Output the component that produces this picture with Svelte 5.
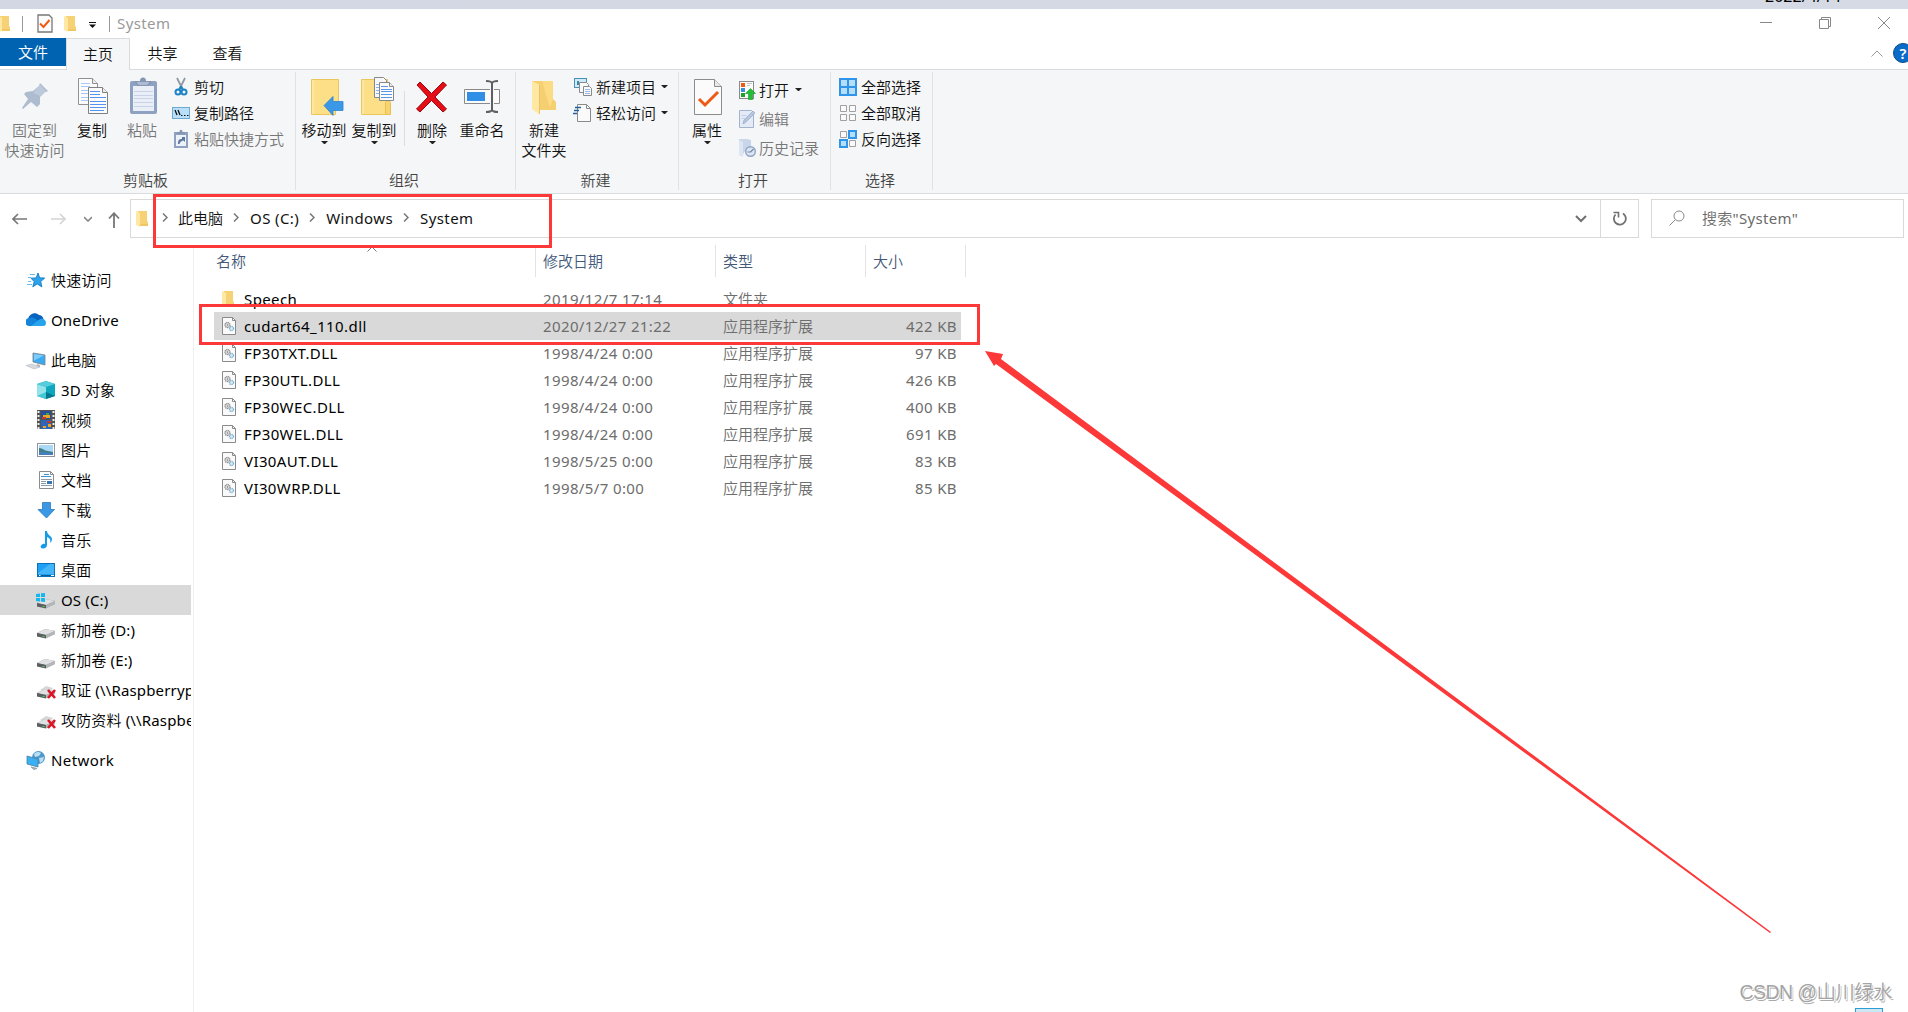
<script lang="ts">
  type NavItem = { label: string; icon: string; child?: boolean; gap?: boolean; selected?: boolean };
  type Small = { label: string; icon: string; disabled?: boolean; menu?: boolean };

  const tabs = ['主页', '共享', '查看'];

  const clipboardSmall: Small[] = [
    { label: '剪切', icon: 'cut' },
    { label: '复制路径', icon: 'path' },
    { label: '粘贴快捷方式', icon: 'shortcut', disabled: true }
  ];
  const newSmall: Small[] = [
    { label: '新建项目', icon: 'newitem', menu: true },
    { label: '轻松访问', icon: 'easy', menu: true }
  ];
  const openSmall: Small[] = [
    { label: '打开', icon: 'open', menu: true },
    { label: '编辑', icon: 'edit', disabled: true },
    { label: '历史记录', icon: 'history', disabled: true }
  ];
  const selectSmall: Small[] = [
    { label: '全部选择', icon: 'selall' },
    { label: '全部取消', icon: 'selnone' },
    { label: '反向选择', icon: 'selinv' }
  ];

  const crumbs = ['此电脑', 'OS (C:)', 'Windows', 'System'];

  const nav: NavItem[] = [
    { label: '快速访问', icon: 'star' },
    { label: 'OneDrive', icon: 'cloud', gap: true },
    { label: '此电脑', icon: 'pc', gap: true },
    { label: '3D 对象', icon: 'cube', child: true },
    { label: '视频', icon: 'video', child: true },
    { label: '图片', icon: 'picture', child: true },
    { label: '文档', icon: 'doc', child: true },
    { label: '下载', icon: 'download', child: true },
    { label: '音乐', icon: 'music', child: true },
    { label: '桌面', icon: 'desktop', child: true },
    { label: 'OS (C:)', icon: 'osdrive', child: true, selected: true },
    { label: '新加卷 (D:)', icon: 'drive', child: true },
    { label: '新加卷 (E:)', icon: 'drive', child: true },
    { label: '取证 (\\\\Raspberrypi)', icon: 'netdrive', child: true },
    { label: '攻防资料 (\\\\Raspberrypi)', icon: 'netdrive', child: true },
    { label: 'Network', icon: 'network', gap: true }
  ];

  const files = [
    { name: 'Speech', date: '2019/12/7 17:14', type: '文件夹', size: '' },
    { name: 'cudart64_110.dll', date: '2020/12/27 21:22', type: '应用程序扩展', size: '422 KB' },
    { name: 'FP30TXT.DLL', date: '1998/4/24 0:00', type: '应用程序扩展', size: '97 KB' },
    { name: 'FP30UTL.DLL', date: '1998/4/24 0:00', type: '应用程序扩展', size: '426 KB' },
    { name: 'FP30WEC.DLL', date: '1998/4/24 0:00', type: '应用程序扩展', size: '400 KB' },
    { name: 'FP30WEL.DLL', date: '1998/4/24 0:00', type: '应用程序扩展', size: '691 KB' },
    { name: 'VI30AUT.DLL', date: '1998/5/25 0:00', type: '应用程序扩展', size: '83 KB' },
    { name: 'VI30WRP.DLL', date: '1998/5/7 0:00', type: '应用程序扩展', size: '85 KB' }
  ];

  let selected = $state('cudart64_110.dll');
</script>

{#snippet folder()}
  <svg width="14" height="18" viewBox="0 0 14 18">
    <path d="M2 1h9v10l1 1v4H2z" fill="#f6d275" />
    <path d="M0 1l4 2v14l-4-2z" fill="#ffe8a3" />
    <path d="M4 15h8" stroke="#e8bd55" />
  </svg>
{/snippet}

{#snippet caret()}
  <svg class="caret" width="7" height="4" viewBox="0 0 7 4"><path d="M0 0h7L4 3H3z" fill="#222" /></svg>
{/snippet}

{#snippet bigIcon(name: string)}
  <svg width="40" height="40" viewBox="0 0 40 40">
    {#if name === 'pin'}
      <path d="M25 6l8 8-2 1-1 0-5 5 0 7-3 3-6-5-8 7-1-1 6-9-4-5 2-2 7-1 6-5z" fill="#adbccf" />
      <path d="M25 8l6 6-6 5-7-3z" fill="#bccadb" />
    {:else if name === 'copy'}
      <path d="M6.500 1.500h14l5 5v21h-19z" fill="#fcfcfc" stroke="#909090" />
      <path d="M20.500 1.500v5h5" fill="#eee" stroke="#909090" />
      <path d="M9 6.500h9M9 9.500h9M9 13.500h8M9 16.500h8M9 20.500h8M9 23.500h8" stroke="#a9c9f5" />
      <path d="M16.500 10.500h14l5 5v21h-19z" fill="#fcfcfc" stroke="#808080" />
      <path d="M30.500 10.500v5h5" fill="#eee" stroke="#808080" />
      <path d="M18 14.500h10M18 17.500h10M18 20.500h16M18 24.500h16M18 27.500h16M18 30.500h16M18 33.500h14" stroke="#5593ec" />
    {:else if name === 'paste'}
      <rect x="8" y="4" width="27" height="33" rx="2" fill="#8ea1c1" />
      <rect x="11" y="9" width="21" height="25" fill="#e9eef7" />
      <path d="M12 14.500h19M12 18.500h19M12 21.500h19M12 25.500h19M12 29.500h19" stroke="#c6d3e8" />
      <path d="M13 4h5c0-2 1-3.500 3-3.500s3 1.500 3 3.500h5v2l-3 3h-10l-3-3z" fill="#8496b4" />
      <path d="M15 5h12v1l-2 2h-8l-2-2z" fill="#aebcd3" />
    {:else if name === 'moveto'}
      <path d="M7.500 2.500h27v26h-3v9h-24z" fill="#fcdf87" stroke="#eac65b" />
      <path d="M9 3v34" stroke="#fff0bb" />
      <path d="M31.500 26v11" stroke="#eac65b" />
      <path d="M20 28.500l9-9v5h10v9h-10v5z" fill="#3a98e6" stroke="#2c84d0" stroke-width="0.8" />
    {:else if name === 'copyto'}
      <path d="M7.500 2.500h26v35h-26z" fill="#fcdf87" stroke="#eac65b" />
      <path d="M9 3v34" stroke="#fff0bb" />
      <path d="M31.500 37.500v-12c0-2 5-2 5 0v12z" fill="#f8d470" stroke="#e8bf52" />
      <path d="M20.500.500h9l3 3v17h-12z" fill="#f6f8fb" stroke="#888" />
      <path d="M22 7.500h3M22 10.500h3M22 13.500h3M22 16.500h3" stroke="#8ab2ea" />
      <path d="M25.500 5.500h10l4 4v14h-14z" fill="#fcfcfc" stroke="#888" />
      <path d="M35.500 5.500v4h4" fill="#eee" stroke="#888" />
      <path d="M27 9.500h7M27 12.500h11M27 14.500h11M27 17.500h11M27 20.500h11" stroke="#5a96e6" />
    {:else if name === 'delete'}
      <path d="M5 8l3-3 11.500 11.500L31 5l3.500 3L23 20l11.500 12-3.500 3-11.500-11.500L8 35l-3.500-3L16 20z" fill="#e50d16" stroke="#9c0910" stroke-width="1" />
    {:else if name === 'rename'}
      <path d="M2.500 12.500h35v14h-35z" fill="#fbfbfb" stroke="#8a8a8a" />
      <rect x="5" y="15" width="18" height="9" fill="#318fe6" />
      <rect x="28" y="10" width="4" height="19" fill="#f5f6f7" />
      <path d="M30 5v29M30 6c-1-2-3-2-6-2M30 6c1-2 3-2 6-2M30 33c-1 2-3 2-6 2M30 33c1 2 3 2 6 2" fill="none" stroke="#606060" stroke-width="2" />
    {:else if name === 'newfolder'}
      <path d="M8 4h21v18l3 3v8H15z" fill="#f5cf70" />
      <path d="M18 4h11v18l-3 9z" fill="#ffe08a" opacity="0.7" />
      <path d="M8 4l8 4v30l-8-6z" fill="#ffe7a4" />
      <path d="M15.500 8v29" stroke="#e9c467" />
    {:else if name === 'props'}
      <path d="M7.500 2.500h20l7 7v28h-27z" fill="#fbfbfb" stroke="#8c8c8c" />
      <path d="M27.500 2.500v7h7" fill="#e8e8e8" stroke="#8c8c8c" />
      <path d="M12 22l6 6 13-13" fill="none" stroke="#ee5a14" stroke-width="3" />
    {/if}
  </svg>
{/snippet}

{#snippet smallIcon(name: string)}
  <svg width="20" height="20" viewBox="0 0 20 20">
    {#if name === 'cut'}
      <path d="M6 1l5.500 11M14 1L8.500 12" stroke="#8c97a3" stroke-width="1.700" />
      <circle cx="7" cy="15" r="2.500" fill="none" stroke="#1c83c6" stroke-width="2" />
      <circle cx="13" cy="15" r="2.500" fill="none" stroke="#1c83c6" stroke-width="2" />
      <path d="M10 9.500l-2 3.500M10 9.500l2 3.500" stroke="#1c83c6" stroke-width="2" />
    {:else if name === 'path'}
      <rect x="1.500" y="4.500" width="17" height="11" fill="#b9e0f8" stroke="#6fa9cd" />
      <path d="M4 7l2 5M7 7l2 5" stroke="#111" stroke-width="1.300" />
      <path d="M10 12.500h1.500M13 12.500h1.500M16 12.500h1.500" stroke="#111" />
    {:else if name === 'shortcut'}
      <path d="M3 3h14v16H3z" fill="#8ea1c1" />
      <path d="M5 6h10v11H5z" fill="#edf1f8" />
      <path d="M6 5V3h2.500c0-3 3-3 3 0H14v2z" fill="#8496b4" />
      <path d="M7 15c0-4 1-5 4-5V8l3 0v5l-1.500-1.500C10 12 9 13 8.500 15z" fill="#5f779f" />
    {:else if name === 'newitem'}
      <rect x="1.500" y="1.500" width="12" height="9" fill="#cfe9f7" stroke="#4a8fb5" />
      <path d="M4 4h2v4H4z" fill="#3c86a8" />
      <path d="M6.500 5.500h7l2 2v8h-9z" fill="#fafafa" stroke="#8a8a8a" />
      <path d="M10.500 9.500h6l2 2v7h-8z" fill="#fafafa" stroke="#8a8a8a" />
      <path d="M12 12.500h5M12 14.500h5M12 16.500h5" stroke="#9abce8" />
    {:else if name === 'easy'}
      <path d="M4.500 1.500h9l4 4v13h-13z" fill="#fafafa" stroke="#8a8a8a" />
      <path d="M13.500 1.500v4h4" fill="none" stroke="#8a8a8a" />
      <path d="M2 4.500h6M1 7.500h5M0 10.500h4" stroke="#235f9c" stroke-width="1.300" />
    {:else if name === 'open'}
      <rect x="1.500" y="1.500" width="14" height="17" fill="#fcfcfc" stroke="#8a8a8a" />
      <rect x="3" y="3" width="4" height="4" fill="#ee5a14" />
      <rect x="3" y="8" width="4" height="4" fill="#3a8ee0" />
      <rect x="3" y="13" width="4" height="4" fill="#1fa22a" />
      <path d="M9 3.500h5M9 5.500h3" stroke="#c5c5c5" />
      <path d="M12.500 8.500l5 5h-3v6h-4v-6h-3z" fill="#22bf35" stroke="#159425" stroke-width="0.600" />
    {:else if name === 'edit'}
      <path d="M1.500 1.500h12l2 2v15h-14z" fill="#e4ebf6" stroke="#a3b3cc" />
      <path d="M5 15l1-4L15 2l2 2-9 9z" fill="#b7c6dc" stroke="#93a7c6" stroke-width="0.700" />
      <path d="M3.500 6.500h5M3.500 9.500h3" stroke="#c3cfe2" />
    {:else if name === 'history'}
      <path d="M1 1h8l4 1v11H7l-3 5-3-1z" fill="#c9d6e9" />
      <path d="M1 2l4 2v15l-4-2z" fill="#dde6f2" />
      <circle cx="12.500" cy="13.500" r="4.800" fill="#dce5f1" stroke="#8ea3c3" stroke-width="1.400" />
      <path d="M12.500 14l3-3M12.500 14h-3" stroke="#6f87ad" stroke-width="1.200" />
    {:else if name === 'selall'}
      <rect x="1" y="1" width="18" height="18" fill="#2f95e8" />
      <path d="M3 3h6v6H3zM11 3h6v6h-6zM3 11h6v6H3zM11 11h6v6h-6z" fill="#b4defa" />
    {:else if name === 'selnone'}
      <path d="M2.500 2.500h6v6h-6zM11.500 2.500h6v6h-6zM2.500 11.500h6v6h-6zM11.500 11.500h6v6h-6z" fill="#fafafa" stroke="#a0a0a0" />
    {:else if name === 'selinv'}
      <path d="M2.500 2.500h6v6h-6zM11.500 11.500h6v6h-6z" fill="#fafafa" stroke="#a0a0a0" />
      <path d="M11 2h7v7h-7zM2 11h7v7H2z" fill="#b4defa" stroke="#2f95e8" stroke-width="2" />
    {/if}
  </svg>
{/snippet}

{#snippet driveBody()}
  <path d="M1 13l8-4 10 2v3l-9 4-9-2z" fill="#8b8d8f" />
  <path d="M1 13l8-4 10 2-9 4z" fill="#dfe1e3" />
  <path d="M1 13l9 2v3.500l-9-2z" fill="#5c5f61" />
  <path d="M10 15l9-4v3l-9 4.500z" fill="#b4b7b9" />
  <path d="M6.500 16.500h2" stroke="#4cd04c" />
{/snippet}

{#snippet navIcon(name: string)}
  <svg width="20" height="20" viewBox="0 0 20 20">
    {#if name === 'star'}
      <path d="M12 3l1.600 4.800 5.100.300-4 3.400 1.200 5.400-4.700-3-4.400 3 1.400-5.300-3.200-3.400 5.200-.300z" fill="#2ba4ec" stroke="#1579c4" stroke-width="0.900" />
      <path d="M4 4.500h5M2 7.500h3M2 11.500h3M1 14.500h5" stroke="#67bdec" />
    {:else if name === 'cloud'}
      <path d="M3 15.500a3.500 3.500 0 0 1-1-6.500C3 4 9 1 13 5c4 .500 4 3 4 3l2 4-2 3.500z" fill="#0a63bd" />
      <path d="M3 16a4 4 0 0 1 1-8c3-1 5 0 7 2l7 5-1 1z" fill="#1483da" />
      <path d="M5 16l7-5.500c4-3.500 8-1 8 2.500a3 3 0 0 1-3 3z" fill="#27a5ec" />
    {:else if name === 'pc'}
      <path d="M7 3l12 2v10l-12-3z" fill="#3aaaf0" stroke="#7e8890" stroke-width="0.900" />
      <path d="M8 4l10 1.500-10 5z" fill="#7ccbfb" />
      <path d="M11 14l3 1v2h-4z" fill="#b1b7bd" />
      <path d="M0 15.500l6-1.500 8 3-6 2z" fill="#d6dade" stroke="#adb3b8" stroke-width="0.500" />
    {:else if name === 'cube'}
      <path d="M1 4l9-3 9 3v12l-9 3-9-3z" fill="#0fa7bd" />
      <path d="M1 4l9 3v12l-9-3z" fill="#94e3ea" />
      <path d="M1 4l9-3 9 3-9 3z" fill="#56cddd" />
      <path d="M10 12l9 4-9 3z" fill="#04798f" />
      <path d="M10 12v7l-9-3z" fill="#45c6d3" />
    {:else if name === 'video'}
      <rect x="1" y="0" width="18" height="19" fill="#56524d" />
      <path d="M2.500 1v18M17.500 1v18" stroke="#eee" stroke-width="2" stroke-dasharray="2 2" />
      <rect x="5" y="1" width="10" height="8" fill="#244f9c" />
      <rect x="5" y="10" width="10" height="9" fill="#2b66bd" />
      <path d="M7 5h7v3H7zM7 16h3v2H7zM12 14h3v3h-3z" fill="#e7a624" />
      <path d="M6 7h4v2H6zM11 11h4v2h-4z" fill="#c5392d" />
      <path d="M10 3h3v2h-3z" fill="#47a142" />
    {:else if name === 'picture'}
      <rect x="1.500" y="3.500" width="17" height="13" fill="#fff" stroke="#8e9499" />
      <rect x="3" y="5" width="14" height="10" fill="#a8d8f5" />
      <path d="M3 8c4 0 5 3 9 3l5 1v3H3z" fill="#3f7e86" />
      <path d="M3 12c5-1 9 1 14 1v2H3z" fill="#457fbb" />
    {:else if name === 'doc'}
      <path d="M3.500 1.500h11l3 3v14h-14z" fill="#fff" stroke="#8c8c8c" />
      <path d="M14.500 1.500v3h3" fill="none" stroke="#8c8c8c" />
      <path d="M8 4.500h5M5 6.500h10" stroke="#3a93cf" />
      <path d="M5 9.500h11M5 11.500h5M5 13.500h5M5 15.500h11" stroke="#8d9ba6" />
      <rect x="11" y="11" width="5" height="3" fill="#3178b5" />
    {:else if name === 'download'}
      <path d="M6.500 2.500h8v7h4L10.500 18 2 9.500h4.500z" fill="#3a98e6" stroke="#2878bd" stroke-width="0.800" />
    {:else if name === 'music'}
      <path d="M9 1h2c0 4 5 5 5 8 0 2-1 3-2 4 1-3 0-5-3-6v8c0 2-2 3.500-4 3.500S4 17 5 15.500s3-2 4-1.500z" fill="#159be8" />
    {:else if name === 'desktop'}
      <rect x="1.500" y="3.500" width="17" height="13" fill="#1ea1f5" stroke="#0c71b5" />
      <path d="M2 13L14 4h4v10H2z" fill="#45b5fa" />
      <path d="M2 15.500h16" stroke="#0b5d98" />
      <path d="M3 15.500h1.500M15 15.500h3" stroke="#fff" />
    {:else if name === 'osdrive'}
      {@render driveBody()}
      <path d="M0 4l4-.5V7H0zM5 3.300L9 3v4H5zM0 8h4v3.500l-4-.5zM5 8h4v4l-4-.5z" fill="#14b7ee" />
    {:else if name === 'drive'}
      {@render driveBody()}
    {:else if name === 'netdrive'}
      <path d="M4 10l6-4 7 2-5 6z" fill="#d5d7d9" />
      {@render driveBody()}
      <path d="M12 10l7 8M19 10l-7 8" stroke="#dc1425" stroke-width="2.600" />
    {:else if name === 'network'}
      <circle cx="12.500" cy="7.500" r="6.500" fill="#4f97c9" />
      <path d="M8 4c3-3 5-2 7-1l-2 3-4 1zM13 8l5-1-1 4-3 2z" fill="#b9e0f2" />
      <path d="M1 6l11 3v8L1 14z" fill="#38b0f5" stroke="#4f7f9d" stroke-width="0.800" />
      <path d="M5 17l6 1.500-3 1z" fill="#aab2b9" stroke="#9ca5ac" />
    {/if}
  </svg>
{/snippet}

{#snippet dll()}
  <svg width="14" height="18" viewBox="0 0 14 18">
    <path d="M.500.500h10l3 3v14H.500z" fill="#fafafa" stroke="#8a8a8a" />
    <path d="M10.500.500v3h3" fill="none" stroke="#8a8a8a" />
    <circle cx="5.500" cy="8" r="2.500" fill="#e4e4e4" stroke="#8b8b8b" stroke-width="1.300" stroke-dasharray="1.200 .5" />
    <circle cx="5.500" cy="8" r=".8" fill="#777" />
    <circle cx="9.500" cy="11.500" r="2" fill="#d9edf8" stroke="#7fb0d0" stroke-width="1.300" stroke-dasharray="1.200 .5" />
  </svg>
{/snippet}

{#snippet big(name: string, lines: string[], disabled = false, menu = false)}
  <button type="button" class="big" class:disabled>
    {@render bigIcon(name)}
    {#each lines as line}
      <span>{line}</span>
    {/each}
    {#if menu}{@render caret()}{/if}
  </button>
{/snippet}

{#snippet smalls(items: Small[])}
  {#each items as item}
    <button type="button" class="small" class:disabled={item.disabled}>
      {@render smallIcon(item.icon)}
      <span>{item.label}</span>
      {#if item.menu}{@render caret()}{/if}
    </button>
  {/each}
{/snippet}

<div class="window">
  <div class="behind"><span>2022/4/14</span></div>

  <header class="titlebar">
    <span class="app-icon">{@render folder()}</span>
    <i class="bar"></i>
    <svg class="check" width="16" height="19" viewBox="0 0 16 19">
      <path d="M1 1h11l3 3v14H1z" fill="#fcfcfc" stroke="#777" stroke-width="1.300" />
      <path d="M3 9.500l3.500 3.500 6-7" fill="none" stroke="#ee5a14" stroke-width="2" />
    </svg>
    {@render folder()}
    <svg class="quick" width="7" height="6" viewBox="0 0 7 6"><path d="M0 0h7v1H0zM0 2.500h7L3.500 6z" fill="#111" /></svg>
    <i class="bar"></i>
    <span class="title">System</span>
    <div class="controls">
      <svg width="12" height="12" viewBox="0 0 12 12"><path d="M0 5.500h12" stroke="#888" /></svg>
      <svg width="12" height="12" viewBox="0 0 12 12"><path d="M.500 2.500h9v9h-9zM2.500 2.500v-2h9v9h-2" fill="none" stroke="#888" /></svg>
      <svg width="12" height="12" viewBox="0 0 12 12"><path d="M0 0l12 12M12 0L0 12" stroke="#888" /></svg>
    </div>
  </header>

  <nav class="tabs">
    <button type="button" class="file">文件</button>
    {#each tabs as tab, index}
      <button type="button" class="tab" class:active={index === 0}>{tab}</button>
    {/each}
    <div class="help">
      <svg width="12" height="7" viewBox="0 0 12 7"><path d="M.500 6.500l5.500-5.500 5.500 5.500" fill="none" stroke="#999" /></svg>
      <span class="question">?</span>
    </div>
  </nav>

  <section class="ribbon">
    <div class="group clipboard">
      <div class="tools">
        {@render big('pin', ['固定到', '快速访问'], true)}
        {@render big('copy', ['复制'])}
        {@render big('paste', ['粘贴'], true)}
        <div class="stack">{@render smalls(clipboardSmall)}</div>
      </div>
      <span class="group-name">剪贴板</span>
    </div>
    <div class="group organize">
      <div class="tools">
        {@render big('moveto', ['移动到'], false, true)}
        {@render big('copyto', ['复制到'], false, true)}
        <i class="divider"></i>
        {@render big('delete', ['删除'], false, true)}
        {@render big('rename', ['重命名'])}
      </div>
      <span class="group-name">组织</span>
    </div>
    <div class="group create">
      <div class="tools">
        {@render big('newfolder', ['新建', '文件夹'])}
        <div class="stack">{@render smalls(newSmall)}</div>
      </div>
      <span class="group-name">新建</span>
    </div>
    <div class="group openers">
      <div class="tools">
        {@render big('props', ['属性'], false, true)}
        <div class="stack loose">{@render smalls(openSmall)}</div>
      </div>
      <span class="group-name">打开</span>
    </div>
    <div class="group select">
      <div class="tools">
        <div class="stack">{@render smalls(selectSmall)}</div>
      </div>
      <span class="group-name">选择</span>
    </div>
  </section>

  <div class="location">
    <div class="arrows">
      <svg width="16" height="12" viewBox="0 0 16 12"><path d="M1 6h14M6 1L1 6l5 5" fill="none" stroke="#777" stroke-width="1.600" /></svg>
      <svg width="16" height="12" viewBox="0 0 16 12"><path d="M1 6h14M10 1l5 5-5 5" fill="none" stroke="#d4d4d4" stroke-width="1.600" /></svg>
      <svg width="8" height="6" viewBox="0 0 8 6"><path d="M0 1l4 4 4-4" fill="none" stroke="#888" stroke-width="1.600" /></svg>
      <svg width="12" height="16" viewBox="0 0 12 16"><path d="M6 1v15M1 6.500L6 1.200l5 5.300" fill="none" stroke="#777" stroke-width="1.800" /></svg>
    </div>
    <div class="address">
      {@render folder()}
      {#each crumbs as crumb}
        <svg class="chevron" width="6" height="9" viewBox="0 0 6 9"><path d="M1 .500l4 4-4 4" fill="none" stroke="#777" stroke-width="1.500" /></svg>
        <span class="crumb">{crumb}</span>
      {/each}
      <svg class="drop" width="12" height="8" viewBox="0 0 12 8"><path d="M1 1l5 5 5-5" fill="none" stroke="#707070" stroke-width="2" /></svg>
      <button type="button" class="refresh" aria-label="refresh">
        <svg width="16" height="16" viewBox="0 0 16 16">
          <path d="M11 2.500A6 6 0 1 1 3.500 3.500" fill="none" stroke="#707070" stroke-width="1.800" />
          <path d="M1.500 1.500h5v5" fill="none" stroke="#707070" stroke-width="1.600" />
        </svg>
      </button>
    </div>
    <div class="search">
      <svg width="16" height="16" viewBox="0 0 16 16"><circle cx="10" cy="6" r="5" fill="none" stroke="#888" /><path d="M6.500 9.500L.500 15.500" stroke="#888" /></svg>
      <span>搜索"System"</span>
    </div>
  </div>

  <div class="body">
    <aside>
      {#each nav as item}
        <div class="nav-item" class:child={item.child} class:gap={item.gap} class:selected={item.selected}>
          {@render navIcon(item.icon)}
          <span>{item.label}</span>
        </div>
      {/each}
    </aside>
    <main>
      <div class="head">
        <span>名称</span>
        <span>修改日期</span>
        <span>类型</span>
        <span>大小</span>
        <svg class="sort" width="10" height="6" viewBox="0 0 10 6"><path d="M.500 5.500L5 1l4.500 4.500" fill="none" stroke="#777" /></svg>
      </div>
      {#each files as file}
        <!-- svelte-ignore a11y_click_events_have_key_events, a11y_no_static_element_interactions -->
        <div class="row" class:selected={file.name === selected} onclick={() => (selected = file.name)}>
          <span class="name">
            {#if file.size}{@render dll()}{:else}{@render folder()}{/if}
            {file.name}
          </span>
          <span>{file.date}</span>
          <span class="type">{file.type}</span>
          <span class="size">{file.size}</span>
        </div>
      {/each}
    </main>
  </div>

  <div class="mark mark-path"></div>
  <div class="mark mark-file"></div>
  <svg class="pointer" width="790" height="585" viewBox="0 0 790 585">
    <path d="M0 0l18 3-2 5L786 581l-1 1L11 13l-2 2z" fill="#fc3838" />
  </svg>
  <div class="watermark">CSDN @山川绿水</div>
  <div class="corner"></div>
</div>

<style>
  :global(body) {
    margin: 0;
    overflow: hidden;
  }

  .window {
    position: relative;
    display: flex;
    flex-direction: column;
    width: 1908px;
    height: 1012px;
    overflow: hidden;
    background: #fff;
    color: #111;
    font-family: 'Noto Sans', 'Noto Sans CJK SC DemiLight', 'Noto Sans CJK SC', sans-serif;
    font-size: 15px;
    line-height: 20px;
  }

  svg {
    display: block;
    flex: none;
  }

  button {
    padding: 0;
    border: none;
    background: transparent;
    color: inherit;
    font: inherit;
  }

  .behind {
    display: flex;
    justify-content: flex-end;
    align-items: flex-end;
    height: 9px;
    overflow: hidden;
    background: linear-gradient(90deg, #d2d7e3, #d6dae4);
  }

  .behind span {
    margin: 0 67px 3px 0;
    font-size: 16px;
    color: #000;
  }

  .titlebar {
    display: flex;
    align-items: center;
    height: 29px;
  }

  .app-icon {
    margin-left: -2px;
  }

  .bar {
    width: 1px;
    height: 16px;
    background: #999;
  }

  .app-icon + .bar {
    margin: 0 14px 0 10px;
  }

  .check {
    margin-right: 11px;
  }

  .quick {
    margin: 2px 13px 0 11px;
  }

  .title {
    margin: -2px 0 0 7px;
    color: #999;
    letter-spacing: 0.4px;
  }

  .controls {
    display: flex;
    gap: 47px;
    margin: -1px 18px 0 auto;
  }

  .tabs {
    display: flex;
    height: 31px;
    border-bottom: 1px solid #dadbdc;
  }

  .file {
    width: 66px;
    height: 28px;
    background: #0063b1;
    color: #fff;
  }

  .tab {
    width: 65px;
    height: 31px;
    padding-bottom: 2px;
  }

  .tab.active {
    box-sizing: border-box;
    width: 64px;
    height: 32px;
    border: 1px solid #dadbdc;
    border-bottom: none;
    background: #f5f6f7;
  }

  .help {
    display: flex;
    align-items: center;
    gap: 10px;
    margin: -1px -5px 0 auto;
  }

  .question {
    width: 18px;
    height: 18px;
    border: 1px solid #0a4d87;
    border-radius: 50%;
    background: #0a6bc9;
    color: #fff;
    font-weight: 600;
    line-height: 18px;
    text-align: center;
  }

  .ribbon {
    display: flex;
    height: 123px;
    border-bottom: 1px solid #dadbdc;
    background: #f5f6f7;
  }

  .group {
    box-sizing: border-box;
    display: flex;
    flex-direction: column;
    justify-content: space-between;
    height: 118px;
    margin-top: 2px;
    border-right: 1px solid #e0e1e2;
  }

  .clipboard {
    width: 296px;
    padding-left: 2px;
  }

  .organize {
    width: 220px;
    padding-left: 3px;
  }

  .create {
    width: 163px;
    padding-left: 3px;
  }

  .openers {
    width: 152px;
    padding-left: 3px;
  }

  .select {
    width: 102px;
    padding-left: 3px;
  }

  .tools {
    display: flex;
  }

  .group-name {
    padding-right: 6px;
    color: #444;
    text-align: center;
  }

  .big {
    display: flex;
    flex-direction: column;
    align-items: center;
    width: 50px;
    padding-top: 5px;
    white-space: nowrap;
  }

  .big svg {
    margin-bottom: 3px;
  }

  .clipboard .big:first-child {
    width: 65px;
  }

  .big .caret {
    margin-top: 1px;
  }

  .disabled {
    color: #777;
  }

  .divider {
    width: 1px;
    height: 55px;
    margin: 19px 2px 0 5px;
    background: #dcdddf;
  }

  .stack {
    display: flex;
    flex-direction: column;
    gap: 6px;
    padding: 5px 0 0 4px;
  }

  .stack.loose {
    gap: 9px;
    padding: 8px 0 0 6px;
  }

  .small {
    display: flex;
    align-items: center;
    gap: 3px;
    height: 20px;
    white-space: nowrap;
  }

  .loose .small {
    gap: 1px;
  }

  .small .caret {
    margin-left: 2px;
  }

  .loose .caret {
    margin-left: 5px;
  }

  .location {
    display: flex;
    height: 40px;
    padding: 5px 4px 6px 0;
  }

  .arrows {
    display: flex;
    align-items: center;
    width: 130px;
  }

  .arrows svg:nth-child(1) {
    margin-left: 12px;
  }

  .arrows svg:nth-child(2) {
    margin-left: 22px;
  }

  .arrows svg:nth-child(3) {
    margin-left: 18px;
  }

  .arrows svg:nth-child(4) {
    margin: 2px 0 0 16px;
  }

  .address {
    box-sizing: border-box;
    display: flex;
    align-items: center;
    width: 1509px;
    height: 39px;
    padding-left: 5px;
    border: 1px solid #d9d9d9;
  }

  .chevron {
    margin: 0 11px 2px 10px;
  }

  .address > svg:first-child + .chevron {
    margin: 0 10px 2px 12px;
  }

  .crumb {
    margin-top: -2px;
    color: #111;
    letter-spacing: 0.4px;
  }

  .crumb:nth-child(3) {
    letter-spacing: 0;
  }

  .drop {
    margin-left: auto;
  }

  .refresh {
    display: flex;
    align-items: center;
    justify-content: center;
    width: 38px;
    height: 37px;
    margin-left: 13px;
    border-left: 1px solid #d9d9d9;
  }

  .search {
    box-sizing: border-box;
    display: flex;
    align-items: center;
    gap: 17px;
    width: 253px;
    height: 39px;
    margin-left: 12px;
    padding: 0 0 2px 17px;
    border: 1px solid #d9d9d9;
    color: #6b6b6b;
    letter-spacing: 0.3px;
  }

  .body {
    display: flex;
    flex: 1;
  }

  aside {
    box-sizing: border-box;
    width: 194px;
    padding: 20px 2px 0 0;
    border-right: 1px solid #f0f0f0;
  }

  .nav-item {
    display: flex;
    align-items: center;
    gap: 5px;
    height: 30px;
    padding-left: 26px;
    overflow: hidden;
    color: #000;
    letter-spacing: 0.15px;
    white-space: nowrap;
  }

  .nav-item.child {
    padding-left: 36px;
  }

  .nav-item.gap {
    margin-top: 10px;
  }

  .nav-item:last-child {
    letter-spacing: 0.4px;
  }

  .nav-item span {
    margin-top: -1px;
  }

  .nav-item.selected,
  .row.selected {
    background: #d9d9d9;
  }

  main {
    flex: 1;
    padding-left: 20px;
  }

  .head {
    position: relative;
    display: grid;
    grid-template-columns: 322px 180px 150px 100px;
    height: 32px;
    margin-bottom: 8px;
    color: #44597a;
    line-height: 32px;
  }

  .head span {
    padding-left: 7px;
    border-right: 1px solid #e3e3e3;
  }

  .head span:first-child {
    padding-left: 2px;
  }

  .sort {
    position: absolute;
    top: 1px;
    left: 153px;
  }

  .row {
    box-sizing: border-box;
    display: grid;
    grid-template-columns: 321px 180px 150px 84px;
    align-items: center;
    width: 747px;
    height: 27px;
    padding: 0 0 0 8px;
    color: #6d6d6d;
    letter-spacing: 0.38px;
  }

  .row.selected {
    height: 28px;
    margin-bottom: -1px;
    padding-bottom: 1px;
  }

  .type {
    letter-spacing: 0;
  }

  .name {
    display: flex;
    align-items: center;
    gap: 8px;
    color: #000;
    letter-spacing: 0.4px;
  }

  .size {
    text-align: right;
  }

  .mark {
    position: absolute;
    box-sizing: border-box;
    border: 3px solid #fc3838;
  }

  .mark-path {
    top: 194px;
    left: 153px;
    width: 399px;
    height: 54px;
  }

  .mark-file {
    top: 304px;
    left: 199px;
    width: 781px;
    height: 41px;
  }

  .pointer {
    position: absolute;
    top: 351px;
    left: 985px;
  }

  .watermark {
    position: absolute;
    right: 16px;
    bottom: 7px;
    color: #a4a4a4;
    font-family: 'Liberation Sans', 'Noto Sans CJK SC DemiLight', 'Noto Sans CJK SC', sans-serif;
    font-size: 19.500px;
    letter-spacing: -0.6px;
    line-height: 26px;
    text-shadow: 1px 1px 0 #fff, 1.500px 1.500px 0 #aaa;
  }

  .corner {
    position: absolute;
    bottom: -10px;
    left: 1855px;
    width: 26px;
    height: 12px;
    border: 1px solid #2e9fd6;
    background: #cce8f4;
  }
</style>
